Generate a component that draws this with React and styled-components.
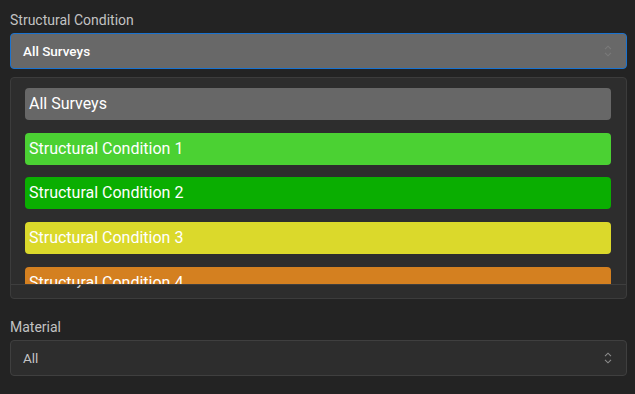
import React from "react";
import styled, { createGlobalStyle } from "styled-components";

const Global = createGlobalStyle`
  html, body { margin: 0; padding: 0; background: #232323; }
  body { font-family: Roboto, "Liberation Sans", sans-serif; }
`;

const Page = styled.div`
  width: 635px;
  height: 394px;
  box-sizing: border-box;
  padding: 11px 8px 0 10px;
  display: flex;
  flex-direction: column;
  overflow: hidden;
`;

const Field = styled.div`
  display: flex;
  flex-direction: column;
  margin-bottom: ${(p) => p.$mb || 0}px;
`;

const Label = styled.div`
  font-size: 14px;
  line-height: 18px;
  color: #c2c2c2;
  margin-bottom: 4px;
`;

const SelectBox = styled.div`
  height: 36px;
  box-sizing: border-box;
  border: 1px solid ${(p) => (p.$focused ? "#1a73d0" : "#3f3f3f")};
  background: ${(p) => (p.$focused ? "#686868" : "#2d2d2d")};
  border-radius: 4px;
  display: flex;
  align-items: center;
  justify-content: space-between;
  padding: 0 14px 0 12px;
  color: ${(p) => (p.$focused ? "#ffffff" : "#c4c4c4")};
  font-size: 13.5px;
  font-weight: ${(p) => (p.$focused ? 500 : 400)};
`;

const Chevrons = ({ color }) => (
  <svg width="8" height="12" viewBox="0 0 8 12" fill="none" stroke={color} strokeWidth="1.1">
    <path d="M1 4.2 L4 1.2 L7 4.2" />
    <path d="M1 7.8 L4 10.8 L7 7.8" />
  </svg>
);

const Panel = styled.div`
  margin-top: 8px;
  height: 222px;
  box-sizing: border-box;
  border: 1px solid #3c3c3c;
  border-radius: 4px;
  background: #2d2d2d;
  display: flex;
  flex-direction: column;
  overflow: hidden;
`;

const List = styled.div`
  height: 207px;
  flex: none;
  overflow: hidden;
  padding: 10px 15px 0 14px;
  box-sizing: border-box;
  display: flex;
  flex-direction: column;
  gap: 12.7px;
  border-bottom: 1px solid #3e3e3e;
`;

const Option = styled.div`
  flex: none;
  height: 32px;
  border-radius: 4px;
  background: ${(p) => p.$bg};
  color: #ffffff;
  font-size: 16px;
  line-height: 32px;
  padding-left: 4px;
`;

const Under = styled.div`
  flex: 1;
  overflow: hidden;
  padding-left: 12px;
  font-size: 13.5px;
  font-weight: 500;
  color: #d0d0d0;
`;

const UnderText = styled.div`
  margin-top: -13px;
  line-height: 16px;
`;

const options = [
  { label: "All Surveys", bg: "#676767" },
  { label: "Structural Condition 1", bg: "#4bd133" },
  { label: "Structural Condition 2", bg: "#0aae01" },
  { label: "Structural Condition 3", bg: "#dbd92b" },
  { label: "Structural Condition 4", bg: "#d48020" },
];

export default function App() {
  return (
    <>
      <Global />
      <Page>
        <Field $mb={19}>
          <Label>Structural Condition</Label>
          <SelectBox $focused>
            <span>All Surveys</span>
            <Chevrons color="#7a7a7a" />
          </SelectBox>
          <Panel>
            <List>
              {options.map((o) => (
                <Option key={o.label} $bg={o.bg}>
                  {o.label}
                </Option>
              ))}
            </List>
            <Under>
              <UnderText>All Surveys</UnderText>
            </Under>
          </Panel>
        </Field>
        <Field>
          <Label>Material</Label>
          <SelectBox>
            <span>All</span>
            <Chevrons color="#8c8c8c" />
          </SelectBox>
        </Field>
      </Page>
    </>
  );
}
